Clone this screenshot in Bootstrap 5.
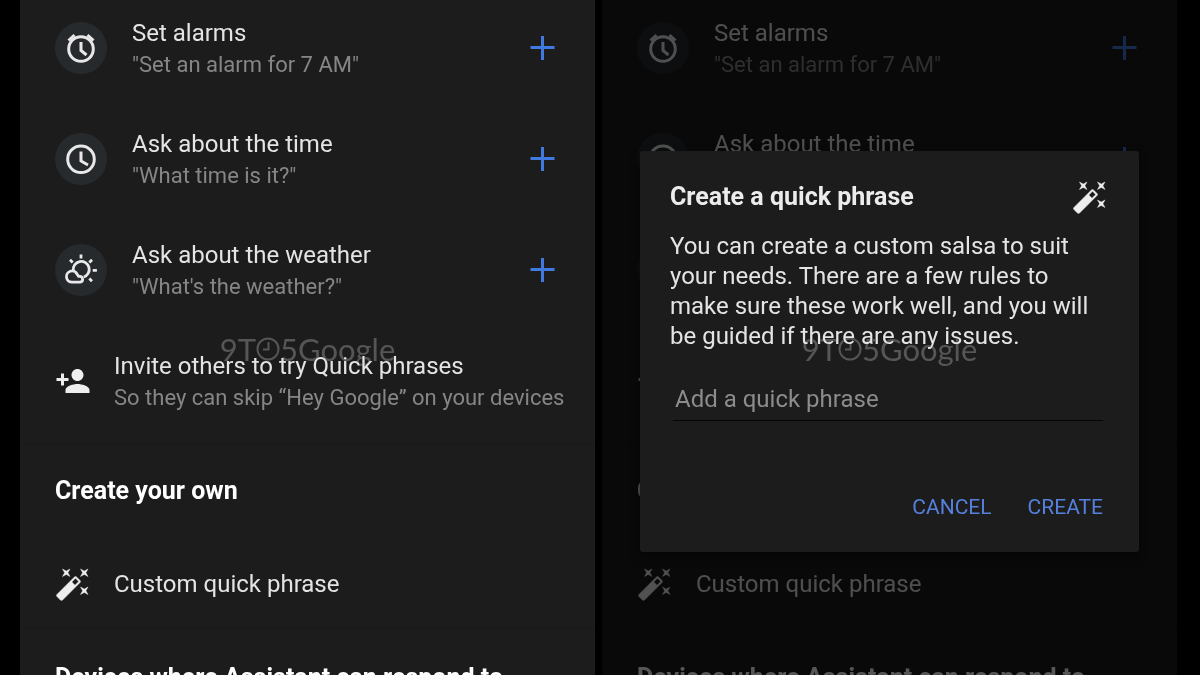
<!DOCTYPE html>
<html lang="en">
<head>
<meta charset="utf-8">
<meta name="viewport" content="width=device-width, initial-scale=1">
<title>Quick phrases</title>
<link href="https://cdn.jsdelivr.net/npm/bootstrap@5.3.0/dist/css/bootstrap.min.css" rel="stylesheet">
<style>
  body { background: #000; color: #e4e4e4; font-family: Roboto, "Noto Sans", sans-serif; font-size: 24px; line-height: 30px; }
  .screens { padding-left: 20px; padding-right: 23px; gap: 7px; }
  .screen { background: #1c1c1c; flex: 1 1 0; min-width: 0; }
  .group { padding: 8px 36px 22px 35px; border-bottom: 1px solid #191919; }
  .group-own { padding-top: 32px; padding-bottom: 4px; }
  .group-devices { padding-top: 34px; border: 0; }
  .phrases { gap: 31px; }
  .phrase { height: 80px; }
  .phrase-text { line-height: 32px; min-width: 0; white-space: nowrap; }
  .pair { padding-top: 2px; }
  .hint { font-size: 22px; color: #868686; }
  .disc { background: #262a2d; width: 52px; height: 52px; margin-right: 25px; }
  .glyph { width: 36px; height: 36px; margin-right: 23px; fill: #eee; }
  .line-art { fill: none; stroke: #e8e8e8; stroke-width: 3; }
  .heading { font-size: 25px; line-height: 30px; font-weight: 700; color: #fff; }
  .own-row { margin-top: 38px; }
  .add { color: #4279e0; margin-right: 4px; width: 26px; height: 26px; }
  .scrim { background: rgba(0, 0, 0, .66); padding: 27px 38px 0; }
  .sheet { background: #1c1c1c; padding: 28px 36px 26px 30px; border-radius: 3px; box-shadow: 0 4px 10px rgba(0, 0, 0, .5); }
  .sheet .heading { color: #ececec; }
  .sheet .glyph { margin: 0 -5px 0 0; }
  .sheet-text { margin-top: 16px; }
  .phrase-input { background: none; border: 0; border-bottom: 1px solid #050505; color: #e4e4e4; font-size: 24px; line-height: 30px; padding: 0 2px 6px; margin-top: 33px; margin-left: 3px; width: calc(100% - 3px); outline: 0; }
  .phrase-input::placeholder { color: #8c8c8c; opacity: 1; }
  .actions { margin-top: 67px; gap: 36px; }
  .action { color: #5580dc; font-size: 21px; line-height: 38px; }
  .watermark { inset: 0; padding-top: 23px; color: #565656; font: 400 31px/40px Lato, sans-serif; mix-blend-mode: lighten; pointer-events: none; }
  .watermark svg { width: 24px; height: 24px; fill: none; stroke: currentColor; stroke-width: 2; }
</style>
</head>
<body class="vh-100 overflow-hidden">
<svg class="d-none" xmlns="http://www.w3.org/2000/svg">
  <symbol id="alarm" viewBox="0 0 52 52"><circle cx="26" cy="27" r="12.3"/><path d="M13.500 18.500l6-5.500M32.500 13l6 5.500M26 20v8.500l5.500 4.500"/></symbol>
  <symbol id="clock" viewBox="0 0 52 52"><circle cx="26" cy="26.300" r="13.300"/><path d="M26 18.500v9.500l7 4"/></symbol>
  <symbol id="weather" viewBox="0 0 52 52"><g stroke-width="2.800"><path d="M18.300 26.500a8 8 0 1 1 10.500 6.500"/><path d="M17 38.200a5.600 5.600 0 1 1 5-8.200l1.600 2.300h1.600a3 3 0 0 1 0 5.900z"/><path d="M26 10.500v4M15 15.800l2.700 2.700M37 15.800l-2.700 2.700M37.700 26.300h4.200M34.300 34.600l2.700 2.700"/></g></symbol>
  <symbol id="invite" viewBox="0 0 24 24"><path d="M15 12c2.210 0 4-1.790 4-4s-1.790-4-4-4-4 1.790-4 4 1.790 4 4 4zm-9-2V7H4v3H1v2h3v3h2v-3h3v-2H6zm9 4c-2.670 0-8 1.340-8 4v2h16v-2c0-2.660-5.330-4-8-4z"/></symbol>
  <symbol id="wand" viewBox="0 0 24 24"><path stroke="#eee" stroke-width=".3" d="M7.500 5.600L10 7 8.600 4.500 10 2 7.500 3.400 5 2l1.400 2.500L5 7zm12 9.800L17 14l1.400 2.500L17 19l2.500-1.400L22 19l-1.400-2.500L22 14zM22 2l-2.500 1.400L17 2l1.400 2.500L17 7l2.500-1.400L22 7l-1.400-2.500zm-7.630 5.290c-.39-.39-1.020-.39-1.410 0L1.290 18.960c-.39.39-.39 1.020 0 1.410l2.340 2.340c.39.39 1.020.39 1.410 0L16.700 11.050c.39-.39.39-1.020 0-1.410l-2.330-2.350zm-1.030 5.490l-2.120-2.120 2.440-2.440 2.120 2.120-2.440 2.440z"/></symbol>
  <symbol id="plus" viewBox="0 0 26 26"><path d="M13.500 1v24M1.500 12.500h24" stroke="currentColor" stroke-width="3"/></symbol>
  <symbol id="dial" viewBox="0 0 24 24"><circle cx="12" cy="12" r="10.500"/><path d="M12.500 5v7.500H7"/></symbol>
</svg>

<main class="screens d-flex h-100">
  <section class="screen position-relative overflow-hidden">
    <div class="group">
      <div class="phrases d-flex flex-column">
        <div class="phrase d-flex align-items-center">
          <svg class="disc rounded-circle flex-shrink-0 line-art"><use href="#alarm"/></svg>
          <div class="phrase-text pair flex-grow-1"><div>Set alarms</div><div class="hint">"Set an alarm for 7 AM"</div></div>
          <button class="add btn p-0 border-0 d-flex" aria-label="Add Set alarms"><svg width="26" height="26"><use href="#plus"/></svg></button>
        </div>
        <div class="phrase d-flex align-items-center">
          <svg class="disc rounded-circle flex-shrink-0 line-art"><use href="#clock"/></svg>
          <div class="phrase-text pair flex-grow-1"><div>Ask about the time</div><div class="hint">"What time is it?"</div></div>
          <button class="add btn p-0 border-0 d-flex" aria-label="Add Ask about the time"><svg width="26" height="26"><use href="#plus"/></svg></button>
        </div>
        <div class="phrase d-flex align-items-center">
          <svg class="disc rounded-circle flex-shrink-0 line-art"><use href="#weather"/></svg>
          <div class="phrase-text pair flex-grow-1"><div>Ask about the weather</div><div class="hint">"What's the weather?"</div></div>
          <button class="add btn p-0 border-0 d-flex" aria-label="Add Ask about the weather"><svg width="26" height="26"><use href="#plus"/></svg></button>
        </div>
        <div class="phrase d-flex align-items-center">
          <svg class="glyph flex-shrink-0"><use href="#invite"/></svg>
          <div class="phrase-text pair"><div>Invite others to try Quick phrases</div><div class="hint">So they can skip “Hey Google” on your devices</div></div>
        </div>
      </div>
    </div>
    <div class="group group-own">
      <h2 class="heading m-0">Create your own</h2>
      <div class="phrase own-row d-flex align-items-center"><svg class="glyph flex-shrink-0"><use href="#wand"/></svg><div class="phrase-text">Custom quick phrase</div></div>
    </div>
    <div class="group group-devices"><h2 class="heading m-0">Devices where Assistant can respond to</h2></div>
    <div class="watermark position-absolute d-flex align-items-center justify-content-center"><span>9T</span><svg><use href="#dial"/></svg><span>5Google</span></div>
  </section>

  <section class="screen position-relative overflow-hidden">
    <div class="group">
      <div class="phrases d-flex flex-column">
        <div class="phrase d-flex align-items-center">
          <svg class="disc rounded-circle flex-shrink-0 line-art"><use href="#alarm"/></svg>
          <div class="phrase-text pair flex-grow-1"><div>Set alarms</div><div class="hint">"Set an alarm for 7 AM"</div></div>
          <button class="add btn p-0 border-0 d-flex" aria-label="Add Set alarms"><svg width="26" height="26"><use href="#plus"/></svg></button>
        </div>
        <div class="phrase d-flex align-items-center">
          <svg class="disc rounded-circle flex-shrink-0 line-art"><use href="#clock"/></svg>
          <div class="phrase-text pair flex-grow-1"><div>Ask about the time</div><div class="hint">&nbsp;</div></div>
          <button class="add btn p-0 border-0 d-flex" aria-label="Add Ask about the time"><svg width="26" height="26"><use href="#plus"/></svg></button>
        </div>
        <div class="phrase d-flex align-items-center"><svg class="disc rounded-circle flex-shrink-0 line-art"><use href="#weather"/></svg></div>
        <div class="phrase d-flex align-items-center"><svg class="glyph flex-shrink-0"><use href="#invite"/></svg></div>
      </div>
    </div>
    <div class="group group-own">
      <h2 class="heading m-0">Create your own</h2>
      <div class="phrase own-row d-flex align-items-center"><svg class="glyph flex-shrink-0"><use href="#wand"/></svg><div class="phrase-text">Custom quick phrase</div></div>
    </div>
    <div class="group group-devices"><h2 class="heading m-0">Devices where Assistant can respond to</h2></div>
    <div class="scrim position-absolute top-0 start-0 w-100 h-100 d-flex align-items-center">
      <form class="sheet w-100" role="dialog" aria-labelledby="sheet-title">
        <div class="d-flex align-items-center justify-content-between">
          <h2 class="heading m-0" id="sheet-title">Create a quick phrase</h2>
          <svg class="glyph flex-shrink-0"><use href="#wand"/></svg>
        </div>
        <p class="sheet-text mb-0">You can create a custom salsa to suit your needs. There are a few rules to make sure these work well, and you will be guided if there are any issues.</p>
        <input class="phrase-input d-block" type="text" placeholder="Add a quick phrase" aria-label="Add a quick phrase">
        <div class="actions d-flex justify-content-end">
          <button type="button" class="action btn p-0 border-0">CANCEL</button>
          <button type="button" class="action btn p-0 border-0">CREATE</button>
        </div>
      </form>
    </div>
    <div class="watermark position-absolute d-flex align-items-center justify-content-center"><span>9T</span><svg><use href="#dial"/></svg><span>5Google</span></div>
  </section>
</main>
<script src="https://cdn.jsdelivr.net/npm/bootstrap@5.3.0/dist/js/bootstrap.bundle.min.js"></script>
</body>
</html>
